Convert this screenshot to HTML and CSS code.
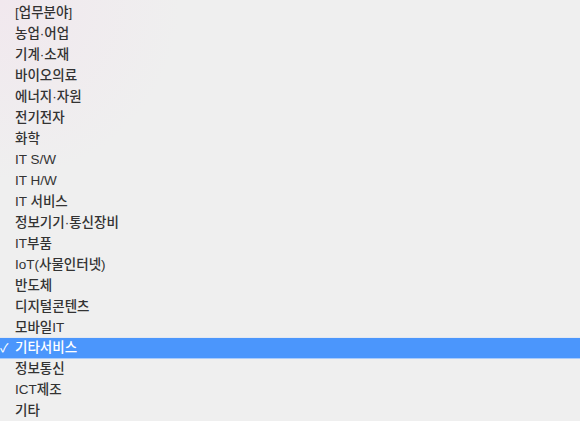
FILE: index.html
```html
<!doctype html>
<html lang="ko">
<head>
  <meta charset="UTF-8">
  <meta name="viewport" content="width=device-width, initial-scale=1.0">
  <title>업무분야</title>
  <link rel="stylesheet" href="styles.css">
</head>
<body>

<ul class="menu">
  <li class="item">[업무분야]</li>
  <li class="item">농업·어업</li>
  <li class="item">기계·소재</li>
  <li class="item">바이오의료</li>
  <li class="item">에너지·자원</li>
  <li class="item">전기전자</li>
  <li class="item">화학</li>
  <li class="item">IT S/W</li>
  <li class="item">IT H/W</li>
  <li class="item">IT 서비스</li>
  <li class="item">정보기기·통신장비</li>
  <li class="item">IT부품</li>
  <li class="item">IoT(사물인터넷)</li>
  <li class="item">반도체</li>
  <li class="item">디지털콘텐츠</li>
  <li class="item">모바일IT</li>
  <li class="item selected"><span class="check">✓</span>기타서비스</li>
  <li class="item">정보통신</li>
  <li class="item">ICT제조</li>
  <li class="item">기타</li>
</ul>

</body>
</html>
```

FILE: styles.css
```css
html, body {
  margin: 0;
  height: 100%;
  overflow: hidden;
}

body {
  font-family: 'Liberation Sans', 'Noto Sans CJK KR', sans-serif;
  background-color: #efefef;
  background-image: radial-gradient(circle at 0 0, #f1e8ee 0, rgba(239, 239, 239, 0) 180px);
  color: #333;
}

.menu {
  list-style: none;
  margin: 0;
  padding: 2px 0 0;
}

.item {
  position: relative;
  height: 21px;
  line-height: 21px;
  padding-left: 15px;
  font-size: 13.5px;
  font-weight: 500;
  white-space: nowrap;
}

.selected {
  background-color: #4b96fc;
  color: #fff;
  border-top: 1px solid #e2e8f2;
  border-bottom: 1px solid #a9cbfb;
  height: 20px;
  line-height: 20px;
  margin-bottom: -1px;
  margin-top: -1px;
}

.check {
  position: absolute;
  left: 0;
  top: 0;
  font-size: 12px;
}
```
